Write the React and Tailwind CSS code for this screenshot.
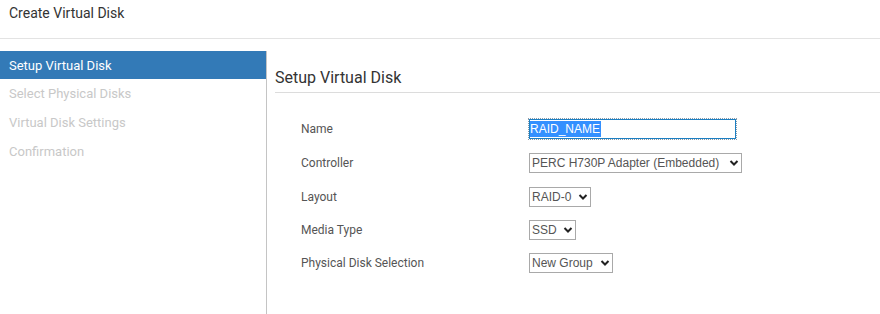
import React from 'react';

const steps = ['Setup Virtual Disk', 'Select Physical Disks', 'Virtual Disk Settings', 'Confirmation'];

function Chevron() {
  return (
    <svg width="10" height="8" viewBox="0 0 10 8" className="shrink-0">
      <path d="M1.5 2 L5 5.5 L8.5 2" fill="none" stroke="#222" strokeWidth="2" />
    </svg>
  );
}

function Select({ value, width }) {
  return (
    <div className={`flex items-center justify-between h-[20px] border border-[#a9a9a9] bg-white pl-[2px] pr-[2px] text-[12px] text-[#555] ${width}`} style={{ fontFamily: '"Liberation Sans", Arial, sans-serif' }}>
      <span className="leading-none whitespace-nowrap">{value}</span>
      <Chevron />
    </div>
  );
}

function Row({ label, h = 'h-[34px]', children }) {
  return (
    <div className={`flex items-center ${h}`}>
      <div className="w-[227px] text-[12px] text-[#555]">{label}</div>
      {children}
    </div>
  );
}

export default function App() {
  return (
    <div className="w-[880px] h-[314px] bg-white overflow-hidden flex flex-col" style={{ fontFamily: 'Roboto, "Liberation Sans", sans-serif' }}>
      <div className="h-[39px] shrink-0 border-b border-[#e3e3e3] flex items-start pt-[3px] pl-[9px]">
        <h1 className="text-[14px] leading-[20px] text-[#333]">Create Virtual Disk</h1>
      </div>
      <div className="flex flex-1 mt-[12px]">
        <div className="w-[266px] shrink-0">
          {steps.map((s, i) => (
            <div key={s} className={`flex items-center pl-[9px] text-[13px] ${i === 0 ? 'h-[28px] pt-[1px] bg-[#337ab7] text-white' : 'h-[29px] text-[#c8c8c8]'}`}>
              {s}
            </div>
          ))}
        </div>
        <div className="flex-1 border-l border-[#c4c4c4]">
          <div className="ml-[8px] mt-[17px] pb-[4px] border-b border-[#dcdcdc]">
            <h2 className="text-[16px] leading-[20px] text-[#333]">Setup Virtual Disk</h2>
          </div>
          <div className="pl-[34px] mt-[19px]">
            <Row label="Name">
              <div className="outline outline-1 outline-dotted outline-[#8a9aa8] h-[20px] w-[207px] border border-[#1b7fc3] bg-white flex items-center ml-[1px]">
                <span className="bg-[#3390ff] text-white text-[12px] leading-[16px] pr-[1px]" style={{ fontFamily: '"Liberation Sans", Arial, sans-serif' }}>RAID_NAME</span>
              </div>
            </Row>
            <Row label="Controller">
              <Select value="PERC H730P Adapter (Embedded)" width="w-[213px] ml-[1px]" />
            </Row>
            <Row label="Layout" h="h-[33px]">
              <Select value="RAID-0" width="w-[62px] ml-[1px]" />
            </Row>
            <Row label="Media Type" h="h-[33px]">
              <Select value="SSD" width="w-[47px] ml-[1px]" />
            </Row>
            <Row label="Physical Disk Selection">
              <Select value="New Group" width="w-[84px] ml-[1px]" />
            </Row>
          </div>
        </div>
      </div>
    </div>
  );
}
